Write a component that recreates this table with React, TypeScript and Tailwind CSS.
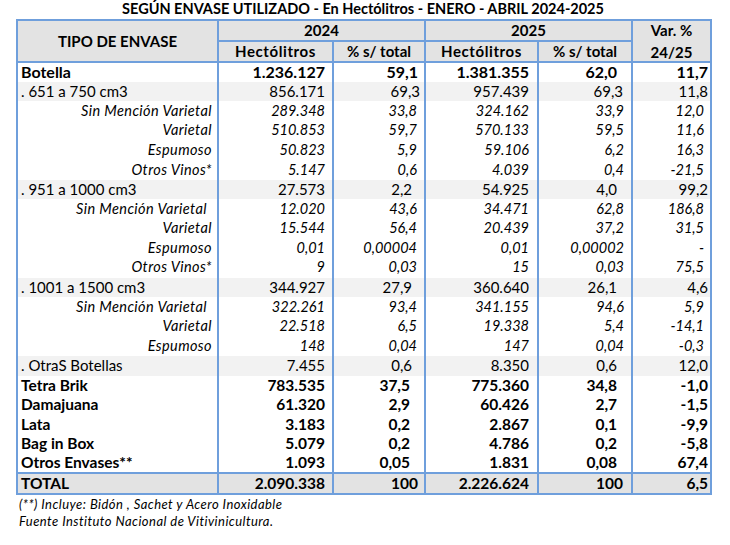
import React from "react";

type Kind = "bold" | "first" | "group" | "group1" | "sub";
type Row = {
  label: string;
  kind: Kind;
  v: [string, string, string, string, string];
  extraPad?: boolean;
};

const rows: Row[] = [
  { label: "Botella", kind: "first", v: ["1.236.127", "59,1", "1.381.355", "62,0", "11,7"] },
  { label: ". 651 a 750 cm3", kind: "group1", v: ["856.171", "69,3", "957.439", "69,3", "11,8"] },
  { label: "Sin Mención Varietal", kind: "sub", v: ["289.348", "33,8", "324.162", "33,9", "12,0"] },
  { label: "Varietal", kind: "sub", v: ["510.853", "59,7", "570.133", "59,5", "11,6"] },
  { label: "Espumoso", kind: "sub", v: ["50.823", "5,9", "59.106", "6,2", "16,3"] },
  { label: "Otros Vinos*", kind: "sub", v: ["5.147", "0,6", "4.039", "0,4", "-21,5"] },
  { label: ". 951 a 1000 cm3", kind: "group", v: ["27.573", "2,2", "54.925", "4,0", "99,2"] },
  { label: "Sin Mención Varietal", kind: "sub", extraPad: true, v: ["12.020", "43,6", "34.471", "62,8", "186,8"] },
  { label: "Varietal", kind: "sub", v: ["15.544", "56,4", "20.439", "37,2", "31,5"] },
  { label: "Espumoso", kind: "sub", v: ["0,01", "0,00004", "0,01", "0,00002", "-"] },
  { label: "Otros Vinos*", kind: "sub", v: ["9", "0,03", "15", "0,03", "75,5"] },
  { label: ". 1001 a 1500 cm3", kind: "group", v: ["344.927", "27,9", "360.640", "26,1", "4,6"] },
  { label: "Sin Mención Varietal", kind: "sub", extraPad: true, v: ["322.261", "93,4", "341.155", "94,6", "5,9"] },
  { label: "Varietal", kind: "sub", v: ["22.518", "6,5", "19.338", "5,4", "-14,1"] },
  { label: "Espumoso", kind: "sub", v: ["148", "0,04", "147", "0,04", "-0,3"] },
  { label: ". OtraS Botellas", kind: "group", v: ["7.455", "0,6", "8.350", "0,6", "12,0"] },
  { label: "Tetra Brik", kind: "bold", v: ["783.535", "37,5", "775.360", "34,8", "-1,0"] },
  { label: "Damajuana", kind: "bold", v: ["61.320", "2,9", "60.426", "2,7", "-1,5"] },
  { label: "Lata", kind: "bold", v: ["3.183", "0,2", "2.867", "0,1", "-9,9"] },
  { label: "Bag in Box", kind: "bold", v: ["5.079", "0,2", "4.786", "0,2", "-5,8"] },
  { label: "Otros Envases**", kind: "bold", v: ["1.093", "0,05", "1.831", "0,08", "67,4"] },
];

const B = "border-[#6f9fdc]";

function pad2024(kind: Kind) {
  switch (kind) {
    case "first":
      return "pr-[6px]";
    case "bold":
      return "pr-[14px]";
    case "group1":
      return "pr-[4px]";
    case "group":
      return "pr-[12px]";
    default:
      return "pr-[7px]";
  }
}

function pad2025(kind: Kind) {
  switch (kind) {
    case "group1":
      return "pr-[8px]";
    case "sub":
      return "pr-[7px]";
    default:
      return "pr-[14px]";
  }
}

function textCls(kind: Kind) {
  if (kind === "first") return "font-bold text-[16px]";
  if (kind === "bold") return "font-bold text-[15.5px]";
  if (kind === "sub") return "italic text-[14.5px]";
  return "text-[15px]";
}

export default function App() {
  return (
    <div
      className="w-[730px] h-[545px] bg-white text-black"
      style={{ fontFamily: "Lato, 'Open Sans', sans-serif" }}
    >
      <div className="pl-[16px]">
        <div className="w-[694px] h-[19px] flex items-center justify-center font-bold text-[14.5px] leading-none">
          SEGÚN ENVASE UTILIZADO - En Hectólitros - ENERO - ABRIL 2024-2025
        </div>
        <table className={`table-fixed border-collapse w-[694px] leading-none border-2 ${B}`}>
          <colgroup>
            <col className="w-[201px]" />
            <col className="w-[115px]" />
            <col className="w-[92px]" />
            <col className="w-[113px]" />
            <col className="w-[94px]" />
            <col className="w-[79px]" />
          </colgroup>
          <thead>
            <tr className="h-[21px] bg-[#e3e3e3]">
              <th rowSpan={2} className={`border-2 ${B} font-bold text-[15px] text-center align-middle`}>
                TIPO DE ENVASE
              </th>
              <th colSpan={2} className={`border-2 ${B} font-bold text-[15px] text-center`}>
                2024
              </th>
              <th colSpan={2} className={`border-2 ${B} font-bold text-[15px] text-center`}>
                2025
              </th>
              <th rowSpan={2} className={`border-2 ${B} font-bold text-[15px] text-center align-middle`}>
                <div className="flex flex-col items-center gap-[7px]">
                  <span>Var. %</span>
                  <span>24/25</span>
                </div>
              </th>
            </tr>
            <tr className="h-[21px] bg-[#e3e3e3]">
              <th className={`border-2 ${B} font-bold text-[15px] tracking-[0.6px] text-center`}>Hectólitros</th>
              <th className={`border-2 ${B} font-bold text-[15px] text-center`}>% s/ total</th>
              <th className={`border-2 ${B} font-bold text-[15px] tracking-[0.6px] text-center`}>Hectólitros</th>
              <th className={`border-2 ${B} font-bold text-[15px] text-center`}>% s/ total</th>
            </tr>
          </thead>
          <tbody>
            {rows.map((r, i) => {
              const gray = r.kind === "group" || r.kind === "group1";
              const tc = textCls(r.kind);
              const bg = gray ? "bg-[#f2f2f2]" : "bg-white";
              return (
                <tr key={i} className={`h-[19.6px] ${bg}`}>
                  <td
                    className={`border-x-2 ${B} ${tc} ${
                      r.kind === "sub"
                        ? `text-right tracking-[0.4px] ${r.extraPad ? "pr-[10px]" : "pr-[5px]"}`
                        : "text-left pl-[3px]"
                    } whitespace-nowrap`}
                  >
                    {r.label}
                  </td>
                  <td className={`border-x-2 ${B} ${tc} text-right pr-[7px]`}>{r.v[0]}</td>
                  <td className={`border-x-2 ${B} ${tc} text-right ${pad2024(r.kind)}`}>{r.v[1]}</td>
                  <td className={`border-x-2 ${B} ${tc} text-right pr-[8px]`}>{r.v[2]}</td>
                  <td className={`border-x-2 ${B} ${tc} text-right ${pad2025(r.kind)}`}>{r.v[3]}</td>
                  <td className={`border-x-2 ${B} ${tc} text-right ${r.kind === "sub" ? "pr-[6px]" : "pr-[2px]"}`}>
                    {r.v[4]}
                  </td>
                </tr>
              );
            })}
            <tr className="h-[21px] bg-[#e3e3e3] font-bold text-[15.5px]">
              <td className={`border-2 ${B} text-left pl-[3px]`}>TOTAL</td>
              <td className={`border-2 ${B} text-right pr-[7px]`}>2.090.338</td>
              <td className={`border-2 ${B} text-right pr-[6px]`}>100</td>
              <td className={`border-2 ${B} text-right pr-[8px]`}>2.226.624</td>
              <td className={`border-2 ${B} text-right pr-[8px]`}>100</td>
              <td className={`border-2 ${B} text-right pr-[2px]`}>6,5</td>
            </tr>
          </tbody>
        </table>
        <div className="pl-[3px] pt-[1px] italic text-[13px] leading-[17px] tracking-[0.45px]">
          <div>(**) Incluye: Bidón , Sachet y Acero Inoxidable</div>
          <div>Fuente Instituto Nacional de Vitivinicultura.</div>
        </div>
      </div>
    </div>
  );
}
